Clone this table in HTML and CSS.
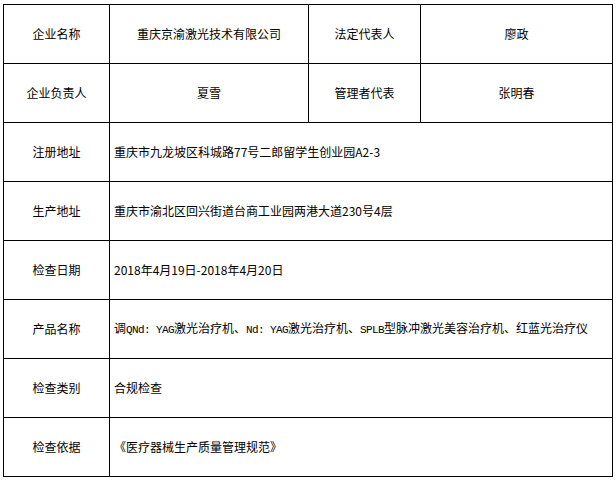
FILE: index.html
```html
<!DOCTYPE html>
<html lang="zh-CN">
<head>
<meta charset="utf-8">
<title>企业信息</title>
<link rel="stylesheet" href="styles.css">
</head>
<body>
<table class="info">
  <colgroup>
    <col class="c1">
    <col class="c2">
    <col class="c3">
    <col class="c4">
  </colgroup>
  <tr>
    <td class="label">企业名称</td>
    <td class="center">重庆京渝激光技术有限公司</td>
    <td class="label">法定代表人</td>
    <td class="center">廖政</td>
  </tr>
  <tr>
    <td class="label">企业负责人</td>
    <td class="center">夏雪</td>
    <td class="label">管理者代表</td>
    <td class="center">张明春</td>
  </tr>
  <tr>
    <td class="label">注册地址</td>
    <td class="value" colspan="3">重庆市九龙坡区科城路77号二郎留学生创业园A2-3</td>
  </tr>
  <tr>
    <td class="label">生产地址</td>
    <td class="value" colspan="3">重庆市渝北区回兴街道台商工业园两港大道230号4层</td>
  </tr>
  <tr>
    <td class="label">检查日期</td>
    <td class="value" colspan="3">2018年4月19日-2018年4月20日</td>
  </tr>
  <tr>
    <td class="label">产品名称</td>
    <td class="value" colspan="3">调<span class="latin">QNd: YAG</span>激光治疗机、<span class="latin">Nd: YAG</span>激光治疗机、<span class="latin">SPLB</span>型脉冲激光美容治疗机、红蓝光治疗仪</td>
  </tr>
  <tr>
    <td class="label">检查类别</td>
    <td class="value" colspan="3">合规检查</td>
  </tr>
  <tr>
    <td class="label">检查依据</td>
    <td class="value" colspan="3">《医疗器械生产质量管理规范》</td>
  </tr>
</table>
</body>
</html>
```

FILE: styles.css
```css
html, body {
  margin: 0;
  padding: 0;
  background: #ffffff;
}

body {
  padding: 4px 0 0 3px;
  font-family: "Noto Sans CJK SC", "Noto Sans", sans-serif;
  font-size: 12px;
  color: #000000;
}

.info {
  border-collapse: collapse;
  table-layout: fixed;
  width: 609px;
}

.c1 { width: 106px; }
.c2 { width: 199px; }
.c3 { width: 112px; }
.c4 { width: 192px; }

.info td {
  border: 1px solid #000000;
  height: 58px;
  padding: 0;
  vertical-align: middle;
  line-height: 16px;
  white-space: nowrap;
}

.info .label,
.info .center {
  text-align: center;
}

.info .value {
  text-align: left;
  padding-left: 4px;
}

.latin {
  font-family: "Liberation Mono", "DejaVu Sans Mono", monospace;
  font-size: 11px;
  letter-spacing: -0.6px;
}
```
